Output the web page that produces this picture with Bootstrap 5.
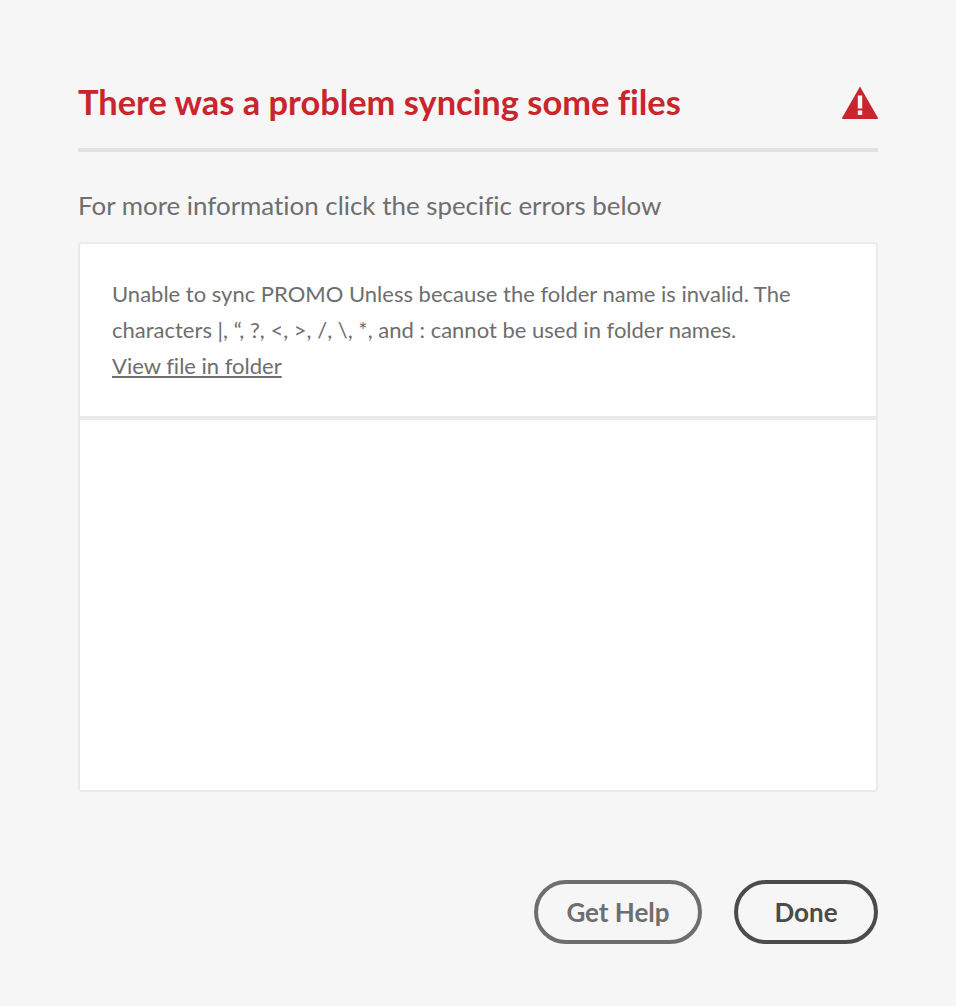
<!DOCTYPE html>
<html lang="en">
<head>
    <meta charset="UTF-8">
    <meta name="viewport" content="width=device-width, initial-scale=1.0">
    <title>Sync errors</title>
    <link href="https://cdn.jsdelivr.net/npm/bootstrap@5.3.0/dist/css/bootstrap.min.css" rel="stylesheet">
    <style>
        body {
            background: #f6f6f6;
            font-family: "Lato", "Open Sans", sans-serif;
            font-variant-ligatures: none;
            color: #6e6e6e;
        }
        .sync-dialog {
            padding: 78px 78px 62px;
            height: 1006px;
        }
        .sync-head {
            height: 74px;
            padding-bottom: 22px;
            border-bottom: 4px solid #e1e1e1;
        }
        .sync-title {
            font-size: 34.4px;
            font-weight: 700;
            line-height: 48px;
            color: #c9252d;
            margin: 0;
        }
        .sync-hint {
            font-size: 25.9px;
            line-height: 36px;
            margin: 35px 0 19px;
        }
        .sync-box {
            height: 550px;
            background: #fff;
            border: 2px solid #eaeaea;
            border-radius: 4px;
        }
        .sync-item {
            height: 176px;
            padding: 32px 32px 0;
            font-size: 22px;
            line-height: 36px;
            border-bottom: 4px solid #eaeaea;
        }
        .sync-item a {
            color: #6e6e6e;
        }
        .sync-btn {
            height: 64px;
            border: 4px solid #6e6e6e;
            border-radius: 32px;
            background: transparent;
            font-size: 26px;
            font-weight: 700;
            line-height: 1;
            color: #6e6e6e;
            padding: 0;
        }
        .sync-btn-help { width: 168px; }
        .sync-btn-done { width: 144px; border-color: #4b4b4b; color: #4b4b4b; }
        .sync-foot { margin-top: 88px; gap: 32px; }
    </style>
</head>
<body>
    <div class="sync-dialog">
        <div class="sync-head d-flex justify-content-between align-items-center">
            <h1 class="sync-title">There was a problem syncing some files</h1>
            <svg width="36" height="33" viewBox="0 0 36 33">
                <path fill="#c9252d" d="M18 0.5 L36 32 Q36 33 35 33 L1 33 Q0 33 0 32 Z"/>
                <rect x="15.8" y="9.5" width="4.4" height="13" fill="#f6f6f6"/>
                <rect x="15.8" y="24.5" width="4.4" height="4.4" fill="#f6f6f6"/>
            </svg>
        </div>
        <p class="sync-hint">For more information click the specific errors below</p>
        <div class="sync-box">
            <div class="sync-item">
                Unable to sync PROMO Unless because the folder name is invalid. The characters |, “, ?, &lt;, &gt;, /, \, *, and : cannot be used in folder names.<br>
                <a href="#">View file in folder</a>
            </div>
        </div>
        <div class="sync-foot d-flex justify-content-end">
            <button type="button" class="btn sync-btn sync-btn-help">Get Help</button>
            <button type="button" class="btn sync-btn sync-btn-done">Done</button>
        </div>
    </div>
    <script src="https://cdn.jsdelivr.net/npm/bootstrap@5.3.0/dist/js/bootstrap.bundle.min.js"></script>
</body>
</html>
